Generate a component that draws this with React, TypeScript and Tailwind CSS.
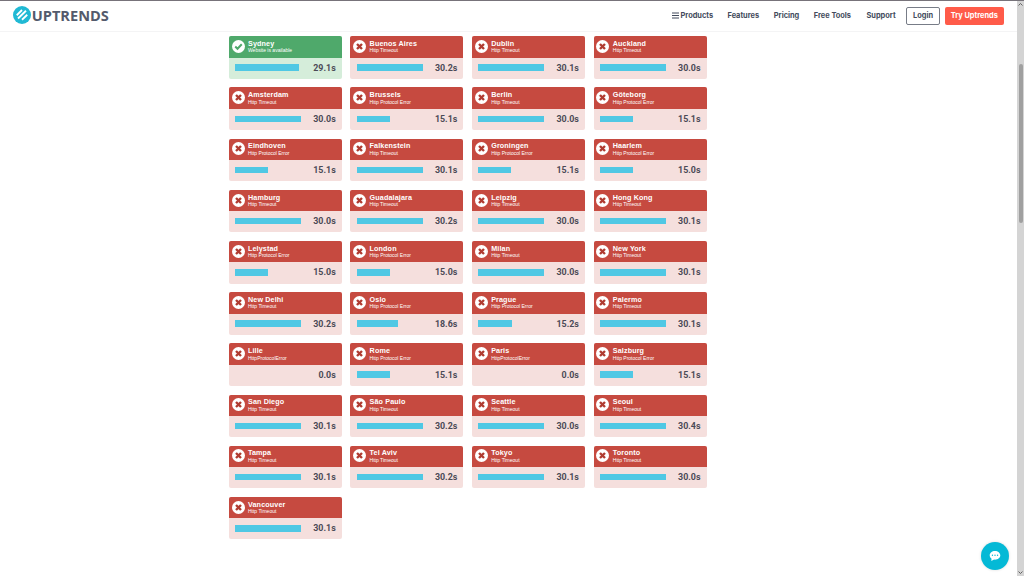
interface Checkpoint {
  city: string;
  status: string;
  seconds: number;
}

const TIMEOUT = 'Http Timeout';
const PROTOCOL = 'Http Protocol Error';
const AVAILABLE = 'Website is available';

const checkpoints: Checkpoint[] = [
  { city: 'Sydney', status: AVAILABLE, seconds: 29.1 },
  { city: 'Buenos Aires', status: TIMEOUT, seconds: 30.2 },
  { city: 'Dublin', status: TIMEOUT, seconds: 30.1 },
  { city: 'Auckland', status: TIMEOUT, seconds: 30.0 },
  { city: 'Amsterdam', status: TIMEOUT, seconds: 30.0 },
  { city: 'Brussels', status: PROTOCOL, seconds: 15.1 },
  { city: 'Berlin', status: TIMEOUT, seconds: 30.0 },
  { city: 'Göteborg', status: PROTOCOL, seconds: 15.1 },
  { city: 'Eindhoven', status: PROTOCOL, seconds: 15.1 },
  { city: 'Falkenstein', status: TIMEOUT, seconds: 30.1 },
  { city: 'Groningen', status: PROTOCOL, seconds: 15.1 },
  { city: 'Haarlem', status: PROTOCOL, seconds: 15.0 },
  { city: 'Hamburg', status: TIMEOUT, seconds: 30.0 },
  { city: 'Guadalajara', status: TIMEOUT, seconds: 30.2 },
  { city: 'Leipzig', status: TIMEOUT, seconds: 30.0 },
  { city: 'Hong Kong', status: TIMEOUT, seconds: 30.1 },
  { city: 'Lelystad', status: PROTOCOL, seconds: 15.0 },
  { city: 'London', status: PROTOCOL, seconds: 15.0 },
  { city: 'Milan', status: TIMEOUT, seconds: 30.0 },
  { city: 'New York', status: TIMEOUT, seconds: 30.1 },
  { city: 'New Delhi', status: TIMEOUT, seconds: 30.2 },
  { city: 'Oslo', status: PROTOCOL, seconds: 18.6 },
  { city: 'Prague', status: PROTOCOL, seconds: 15.2 },
  { city: 'Palermo', status: TIMEOUT, seconds: 30.1 },
  { city: 'Lille', status: 'HttpProtocolError', seconds: 0 },
  { city: 'Rome', status: PROTOCOL, seconds: 15.1 },
  { city: 'Paris', status: 'HttpProtocolError', seconds: 0 },
  { city: 'Salzburg', status: PROTOCOL, seconds: 15.1 },
  { city: 'San Diego', status: TIMEOUT, seconds: 30.1 },
  { city: 'São Paulo', status: TIMEOUT, seconds: 30.2 },
  { city: 'Seattle', status: TIMEOUT, seconds: 30.0 },
  { city: 'Seoul', status: TIMEOUT, seconds: 30.4 },
  { city: 'Tampa', status: TIMEOUT, seconds: 30.1 },
  { city: 'Tel Aviv', status: TIMEOUT, seconds: 30.2 },
  { city: 'Tokyo', status: TIMEOUT, seconds: 30.1 },
  { city: 'Toronto', status: TIMEOUT, seconds: 30.0 },
  { city: 'Vancouver', status: TIMEOUT, seconds: 30.1 },
];

function StatusIcon({ ok }: { ok: boolean }) {
  return (
    <svg viewBox="0 0 26 26" className="size-[13px] shrink-0">
      <circle cx="13" cy="13" r="13" fill="#fff" />
      {ok ? (
        <path d="M6.5 13l4.5 4.5 8.5-9" fill="none" stroke="#50a96c" strokeWidth="4" />
      ) : (
        <path d="M8 8l10 10M18 8L8 18" fill="none" stroke="#b03b31" strokeWidth="4.8" />
      )}
    </svg>
  );
}

function CheckpointCard({ city, status, seconds }: Checkpoint) {
  const ok = status === AVAILABLE;

  return (
    <article className={`h-[42.5px] overflow-hidden rounded-[2px] ${ok ? 'bg-[#d5edda]' : 'bg-[#f5dfdd]'}`}>
      <div className={`flex h-[21.3px] gap-[3.3px] pt-[3.7px] pl-[2.8px] text-white ${ok ? 'bg-[#4fa96b]' : 'bg-[#c64a40]'}`}>
        <StatusIcon ok={ok} />
        <div className="font-['Liberation_Sans',sans-serif] whitespace-nowrap">
          <h3 className="text-[7.2px] leading-[8px] font-bold tracking-[0.12px]">{city}</h3>
          <p className="-mt-[0.5px] text-[5px] leading-[6px]">{status}</p>
        </div>
      </div>
      <div className="flex h-[20px] items-center justify-between pr-[6.2px] pl-[6.2px]">
        <div className="h-[6.5px] bg-[#50c8e4]" style={{ width: Math.min(seconds * 2.2, 66.2) }} />
        <span className="pt-[1px] font-['Roboto',sans-serif] text-[8.9px] leading-none font-bold text-[#4b4a56]">
          {seconds.toFixed(1)}s
        </span>
      </div>
    </article>
  );
}

function Logo() {
  return (
    <a className="flex items-center">
      <svg viewBox="0 0 36 36" className="size-[18px]">
        <circle cx="18" cy="18" r="18" fill="#20b9d4" />
        <g stroke="#fff" strokeWidth="3.6">
          <path d="M7.5 18.5L18 8" />
          <path d="M10 25L26 9.5" />
          <path d="M18 27.5L28.5 17.5" />
        </g>
      </svg>
      <span className="ml-[1px] font-['Open_Sans',sans-serif] text-[14.6px] leading-[18px] font-bold text-[#535a6c]">
        UPTRENDS
      </span>
    </a>
  );
}

function Header() {
  return (
    <header className="flex h-[32px] items-start justify-between border-t border-b border-t-[#77737a] border-b-[#f4f4f5] pr-[13px] pl-[12.7px]">
      <div className="pt-[5px]">
        <Logo />
      </div>
      <nav className="flex items-center pt-[5px] font-['Inter',sans-serif] text-[7.4px] leading-[19px] font-bold whitespace-nowrap text-[#434b5c]">
        <a className="flex w-[55.5px] items-center gap-[1.5px]">
          <svg viewBox="0 0 14 14" className="size-[7px]">
            <path d="M0 2h14M0 7h14M0 12h14" stroke="#434b5c" strokeWidth="2" />
          </svg>
          Products
        </a>
        <a className="w-[46.3px]">Features</a>
        <a className="w-[40px]">Pricing</a>
        <a className="w-[52.7px]">Free Tools</a>
        <a className="w-[39.5px]">Support</a>
        <a className="h-[18px] w-[34px] rounded-[2px] border border-[#777c87] text-center leading-[16px]">Login</a>
        <a className="ml-[4.5px] h-[18px] w-[59.5px] rounded-[2px] bg-[#ff5b49] text-center leading-[18px] text-white">Try Uptrends</a>
      </nav>
    </header>
  );
}

function ScrollTrack() {
  return (
    <div className="flex w-[7px] shrink-0 flex-col items-center border-t border-t-[#77737a] bg-[#d4d4d4]">
      <svg viewBox="0 0 7 7" className="size-[7px]">
        <path d="M1.5 4.5l2-2 2 2" fill="none" stroke="#626262" />
      </svg>
      <div className="mt-[56px] h-[159px] w-[4px] rounded-full bg-[#a0a0a0]" />
      <svg viewBox="0 0 7 7" className="mt-auto size-[7px]">
        <path d="M1.5 2.5l2 2 2-2" fill="none" stroke="#626262" />
      </svg>
    </div>
  );
}

function ChatButton() {
  return (
    <button className="fixed right-[15.5px] bottom-[6.5px] flex size-[28px] items-center justify-center rounded-full bg-[#04b9d6] shadow-[0_0_3px_rgba(0,0,0,0.15)]">
      <svg viewBox="0 0 26 26" className="size-[12px]">
        <path d="M13 2C6.5 2 1.5 6 1.5 11.5c0 3 1.5 5.5 4 7.2L5 24l6-3.2c7.5.8 13.500-3.3 13.500-9.3C24.5 6 19.5 2 13 2z" fill="#fff" />
        <g fill="#04b9d6">
          <circle cx="7.5" cy="11.5" r="1.5" />
          <circle cx="13" cy="11.5" r="1.5" />
          <circle cx="18.5" cy="11.5" r="1.5" />
        </g>
      </svg>
    </button>
  );
}

export default function App() {
  return (
    <div className="flex h-screen overflow-hidden bg-white">
      <div className="min-w-0 flex-1">
        <Header />
        <main className="grid grid-cols-[repeat(4,113px)] gap-x-[8.6px] gap-y-[8.7px] pt-[4.3px] pl-[228.9px]">
          {checkpoints.map((checkpoint) => (
            <CheckpointCard key={checkpoint.city} {...checkpoint} />
          ))}
        </main>
      </div>
      <ScrollTrack />
      <ChatButton />
    </div>
  );
}
